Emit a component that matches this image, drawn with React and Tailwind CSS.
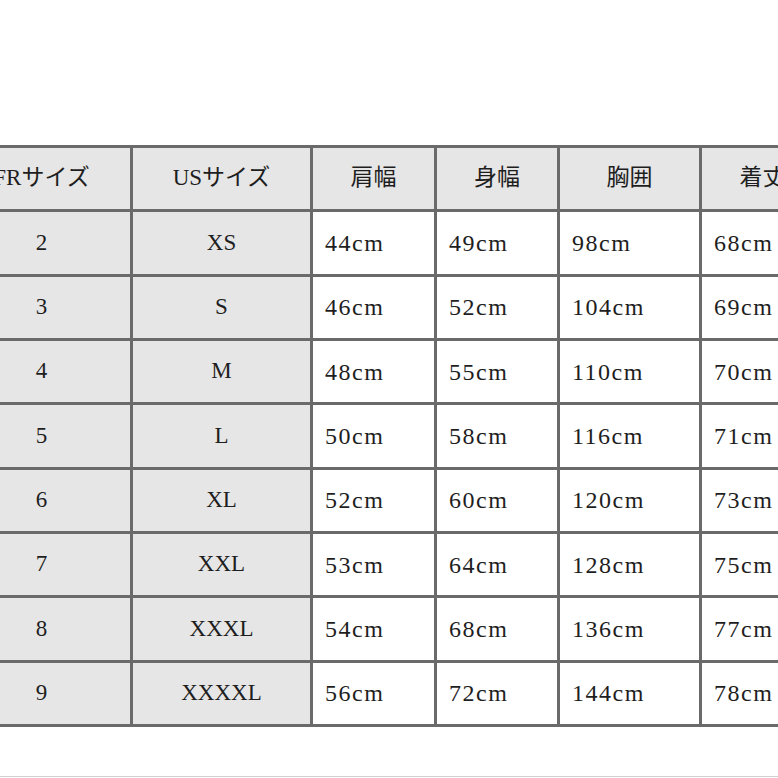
import React from "react";

const HEAD = ["FRサイズ", "USサイズ", "肩幅", "身幅", "胸囲", "着丈"];

const ROWS = [
  ["2", "XS", "44cm", "49cm", "98cm", "68cm"],
  ["3", "S", "46cm", "52cm", "104cm", "69cm"],
  ["4", "M", "48cm", "55cm", "110cm", "70cm"],
  ["5", "L", "50cm", "58cm", "116cm", "71cm"],
  ["6", "XL", "52cm", "60cm", "120cm", "73cm"],
  ["7", "XXL", "53cm", "64cm", "128cm", "75cm"],
  ["8", "XXXL", "54cm", "68cm", "136cm", "77cm"],
  ["9", "XXXXL", "56cm", "72cm", "144cm", "78cm"],
];

export default function App() {
  return (
    <div
      className="w-[778px] h-[778px] overflow-hidden bg-white text-[#1e1e1e]"
      style={{ fontFamily: '"Liberation Serif", "Noto Sans CJK JP", serif' }}
    >
      <div className="pt-[145px]">
        <div className="ml-[-50px] w-max grid grid-cols-[177px_177px_121px_120px_139px_121px] grid-rows-[repeat(9,1fr)] h-[582px] gap-[3px] p-[3px] bg-[#6a6a6a] text-[23px]">
          {HEAD.map((h) => (
            <div key={h} className="bg-[#e6e6e6] flex items-center justify-center">
              {h}
            </div>
          ))}
          {ROWS.map((r) =>
            r.map((c, i) =>
              i < 2 ? (
                <div key={r[0] + i} className="bg-[#e6e6e6] flex items-center justify-center">
                  {c}
                </div>
              ) : (
                <div key={r[0] + i} className="bg-white flex items-center pl-[12px] text-[24px] tracking-[1.5px]">
                  {c}
                </div>
              )
            )
          )}
        </div>
      </div>
      <div className="mt-[49px] h-px bg-[#d0d0d0]" />
    </div>
  );
}
